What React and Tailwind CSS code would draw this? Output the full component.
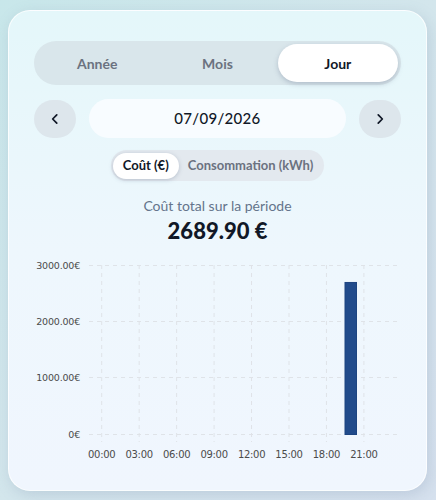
const PERIODS = ['Année', 'Mois', 'Jour'];
const Y_TICKS = [
  { label: '3000.00€', y: 10 },
  { label: '2000.00€', y: 66 },
  { label: '1000.00€', y: 122 },
  { label: '0€', y: 179 },
];
const X_TICKS = ['00:00', '03:00', '06:00', '09:00', '12:00', '15:00', '18:00', '21:00'];

function Chart() {
  const base = 179;
  const barTop = base - (2689.9 / 3000) * 169;

  return (
    <svg width="366" height="215" viewBox="0 0 366 215" className="block">
      {Y_TICKS.map((t) => (
        <g key={t.label}>
          <line x1="55" x2="364" y1={t.y + 0.5} y2={t.y + 0.5} stroke="#dfe3e8" strokeDasharray="4 4" />
          <text x="46" y={t.y + 3.5} textAnchor="end" fontSize="9.5" letterSpacing="-0.2" fill="#4b4b4b" fontFamily="DejaVu Sans, sans-serif">
            {t.label}
          </text>
        </g>
      ))}
      {X_TICKS.map((label, i) => {
        const x = 67.7 + i * 37.46;
        return (
          <g key={label}>
            <line x1={x} x2={x} y1="10" y2="187" stroke="#dfe3e8" strokeDasharray="4 4" />
            <text x={x} y="203" textAnchor="middle" fontSize="10" letterSpacing="-0.3" fill="#4b4b4b" fontFamily="DejaVu Sans, sans-serif">
              {label}
            </text>
          </g>
        );
      })}
      <rect x="311" y={barTop} width="11.5" height={base - barTop + 0.5} fill="#214b8b" stroke="#1d4480" strokeWidth="1" />
    </svg>
  );
}

export default function App() {
  return (
    <div className="w-[436px] h-[500px] bg-gradient-to-br from-[#c8e7ea] via-[#d3e6ec] to-[#d6e1ee] pt-[10px] pl-[8px] font-['Lato',sans-serif]">
      <div className="w-[419px] h-[481px] rounded-[22px] border border-white/80 bg-gradient-to-b from-[#e4f7fa] via-[#eef7fd] to-[#f0f6fe] shadow-[2px_4px_14px_rgba(120,140,170,0.25)] px-[25px] pt-[30px]">
        <div className="flex h-[44px] rounded-full bg-[#d9e6eb] p-[3px]">
          {PERIODS.map((p) => (
            <button
              key={p}
              type="button"
              className={`flex-1 rounded-full text-[14px] font-bold ${p === 'Jour' ? 'bg-white text-[#111827] shadow-[0_2px_5px_rgba(100,116,139,0.35)]' : 'text-[#6b7280]'}`}
            >
              {p}
            </button>
          ))}
        </div>

        <div className="flex items-center gap-[13px] mt-[14px]">
          <button type="button" className="w-[42px] h-[38px] rounded-full bg-[#dde6ec] flex items-center justify-center text-[#111827]">
            <svg width="14" height="14" viewBox="0 0 24 24" fill="none" stroke="currentColor" strokeWidth="3" strokeLinecap="round" strokeLinejoin="round">
              <path d="M15 5l-7 7 7 7" />
            </svg>
          </button>
          <div className="flex-1 h-[39px] rounded-full bg-[#f8fcff] flex items-center justify-center text-[15px] font-medium text-[#111827] tracking-[0.3px]">
            07/09/2026
          </div>
          <button type="button" className="w-[42px] h-[38px] rounded-full bg-[#dde6ec] flex items-center justify-center text-[#111827]">
            <svg width="14" height="14" viewBox="0 0 24 24" fill="none" stroke="currentColor" strokeWidth="3" strokeLinecap="round" strokeLinejoin="round">
              <path d="M9 5l7 7-7 7" />
            </svg>
          </button>
        </div>

        <div className="flex justify-center mt-[12px]">
          <div className="flex items-center h-[31px] rounded-full bg-[#e3e9ef] p-[2px] pr-[11px] gap-[9px]">
            <span className="h-[26px] px-[10px] rounded-full bg-white shadow-[0_1px_4px_rgba(100,116,139,0.35)] flex items-center text-[13px] font-bold text-[#111827]">
              Coût (€)
            </span>
            <span className="text-[13px] font-bold text-[#6b7280]">Consommation (kWh)</span>
          </div>
        </div>

        <div className="mt-[15px] text-center text-[14px] text-[#64748b] leading-[20px]">Coût total sur la période</div>
        <div className="mt-0 text-center text-[22px] font-black text-[#111827] leading-[30px]">2689.90 €</div>

        <div className="mt-[9px]">
          <Chart />
        </div>
      </div>
    </div>
  );
}
